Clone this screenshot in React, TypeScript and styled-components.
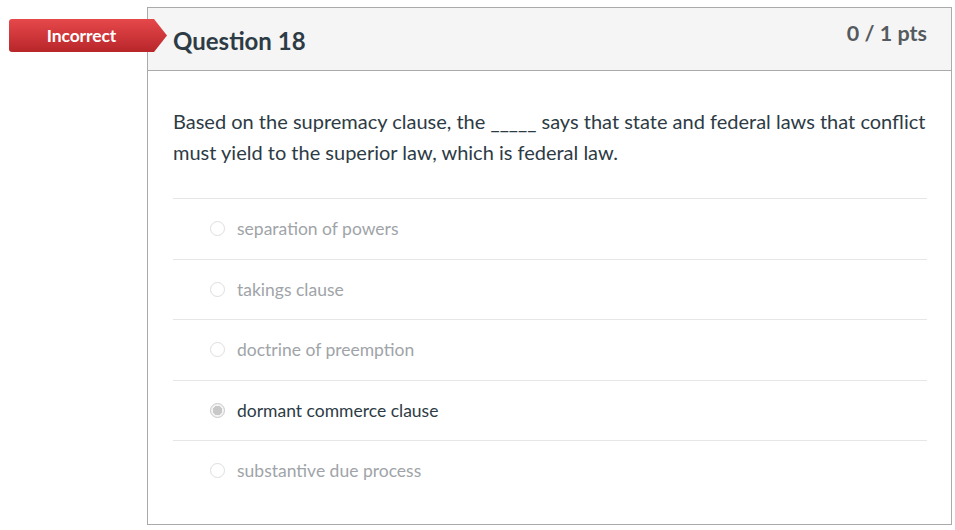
import React from "react";
import styled, { createGlobalStyle } from "styled-components";

const Global = createGlobalStyle`
  html, body {
    margin: 0;
    background: #fff;
    font-family: Lato, "Open Sans", "Liberation Sans", sans-serif;
  }
`;

const Page = styled.div`
  position: relative;
  padding: 7px 3px 0 147px;
  width: 955px;
  box-sizing: border-box;
`;

const Badge = styled.div`
  position: absolute;
  left: 9px;
  top: 19px;
  width: 158px;
  height: 33px;
  padding-right: 13px;
  box-sizing: border-box;
  display: flex;
  align-items: center;
  justify-content: center;
  color: #fff;
  font-weight: 700;
  font-size: 17.5px;
  letter-spacing: -0.1px;
  background: linear-gradient(#e6484b, #b8262a);
  clip-path: polygon(0 0, 145px 0, 158px 50%, 145px 100%, 0 100%);
  border-radius: 3px 0 0 3px;
  z-index: 2;
`;

const Card = styled.div`
  border: 1px solid #aaa;
  height: 518px;
  box-sizing: border-box;
`;

const Header = styled.div`
  display: flex;
  justify-content: space-between;
  align-items: center;
  height: 63px;
  box-sizing: border-box;
  padding: 0 24px 0 25px;
  background: #f5f5f5;
  border-bottom: 1px solid #aaa;
`;

const Title = styled.h2`
  margin: 3px 0 0;
  font-size: 24px;
  font-weight: 700;
  color: #2d3b45;
`;

const Points = styled.div`
  align-self: flex-start;
  margin-top: 12px;
  font-size: 21.5px;
  font-weight: 700;
  color: #555a5e;
`;

const Body = styled.div`
  padding: 35px 24px 0 25px;
`;

const Prompt = styled.p`
  margin: 0 0 30px;
  font-size: 20px;
  line-height: 31px;
  color: #2d3b45;
`;

const Answer = styled.div<{ $picked?: boolean }>`
  display: flex;
  align-items: center;
  gap: 12px;
  height: 60.5px;
  box-sizing: border-box;
  padding-left: 37px;
  border-top: 1px solid #e6e6e6;
  font-size: 17.5px;
  color: ${(p) => (p.$picked ? "#2d3b45" : "#a0a4a8")};
`;

const Radio = styled.span<{ $picked?: boolean }>`
  width: 15px;
  height: 15px;
  flex: none;
  border-radius: 50%;
  box-sizing: border-box;
  border: 1px solid ${(p) => (p.$picked ? "#c8c8c8" : "#dedede")};
  background: ${(p) =>
    p.$picked ? "radial-gradient(circle, #c8c8c8 0 4.5px, #f4f4f4 5px)" : "#fff"};
`;

const answers = [
  "separation of powers",
  "takings clause",
  "doctrine of preemption",
  "dormant commerce clause",
  "substantive due process",
];

export default function App() {
  const picked = 3;
  return (
    <Page>
      <Global />
      <Badge>Incorrect</Badge>
      <Card>
        <Header>
          <Title>Question 18</Title>
          <Points>0 / 1 pts</Points>
        </Header>
        <Body>
          <Prompt>
            Based on the supremacy clause, the _____ says that state and federal laws that conflict
            must yield to the superior law, which is federal law.
          </Prompt>
          {answers.map((a, i) => (
            <Answer key={a} $picked={i === picked}>
              <Radio $picked={i === picked} />
              {a}
            </Answer>
          ))}
        </Body>
      </Card>
    </Page>
  );
}
